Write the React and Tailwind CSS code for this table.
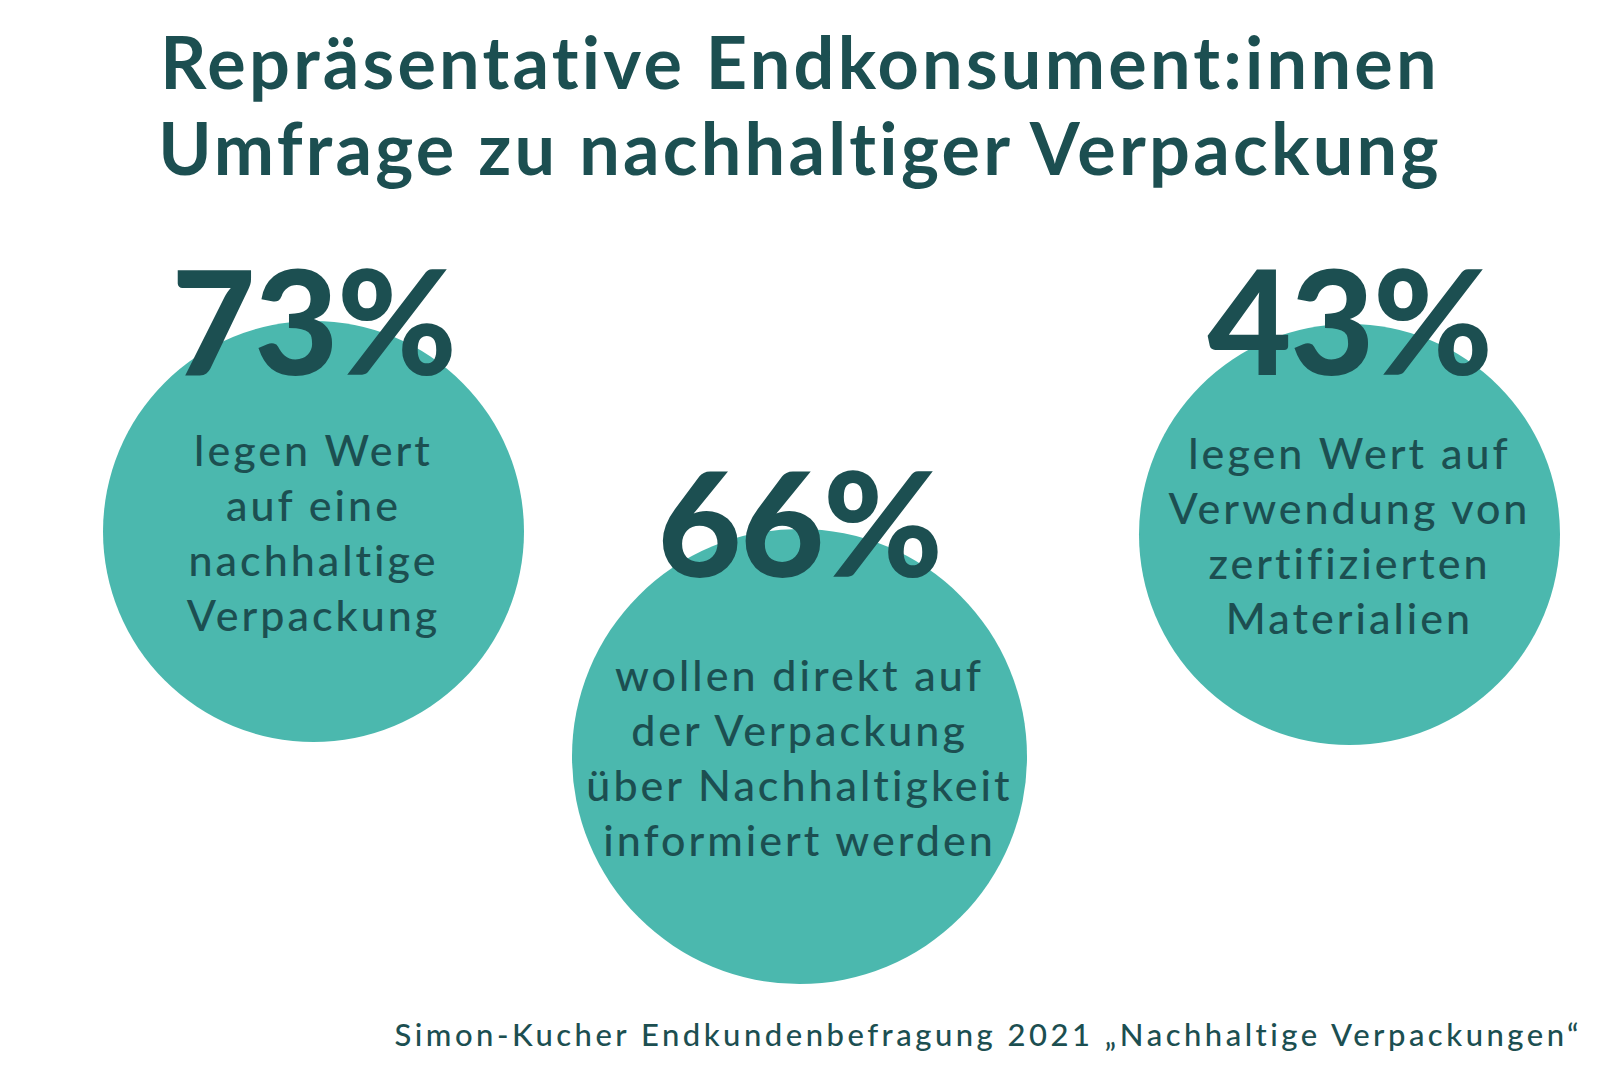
// Survey infographic: three stat bubbles on white
const STATS = [
  {
    value: '73%',
    lines: ['legen Wert', 'auf eine', 'nachhaltige', 'Verpackung'],
    col: 'w-[421px] mt-[57px]',
    circle: 'w-[421px] h-[421px] -mt-[71px]',
  },
  {
    value: '66%',
    lines: ['wollen direkt auf', 'der Verpackung', 'über Nachhaltigkeit', 'informiert werden'],
    col: 'w-[455px] mt-[259px] ml-[48px]',
    circle: 'w-[455px] h-[455px] -mt-[65px]',
  },
  {
    value: '43%',
    lines: ['legen Wert auf', 'Verwendung von', 'zertifizierten', 'Materialien'],
    col: 'w-[421px] mt-[57px] ml-[112px]',
    circle: 'w-[421px] h-[421px] -mt-[68px]',
  },
];

function StatBubble({ stat }) {
  return (
    <div className={`flex flex-col items-center shrink-0 ${stat.col}`}>
      <div className="relative z-10 text-[145px] leading-[145px] font-black tracking-[-0.01em] whitespace-nowrap">
        {stat.value}
      </div>
      <div className={`rounded-full bg-[#4bb8ae] flex flex-col items-center justify-center shrink-0 ${stat.circle}`}>
        {stat.lines.map((l) => (
          <div key={l} className="text-[43px] leading-[55px] font-medium tracking-[0.07em] whitespace-nowrap text-center">
            {l}
          </div>
        ))}
      </div>
    </div>
  );
}

export default function App() {
  return (
    <div className="w-[1600px] h-[1067px] bg-white text-[#1c4f51] overflow-hidden" style={{ fontFamily: 'Lato, "Open Sans", sans-serif' }}>
      {/* Title */}
      <h1 className="pt-[18px] text-center text-[72px] leading-[86px] font-bold tracking-[0.045em]">
        Repräsentative Endkonsument:innen
        <br />
        Umfrage zu nachhaltiger Verpackung
      </h1>

      {/* Bubbles */}
      <div className="flex items-start pl-[103px]">
        {STATS.map((s) => (
          <StatBubble key={s.value} stat={s} />
        ))}
      </div>

      {/* Source */}
      <p className="mt-[32px] pr-[18px] text-right text-[31px] leading-9 font-medium tracking-[0.113em]">
        Simon-Kucher Endkundenbefragung 2021 „Nachhaltige Verpackungen“
      </p>
    </div>
  );
}
